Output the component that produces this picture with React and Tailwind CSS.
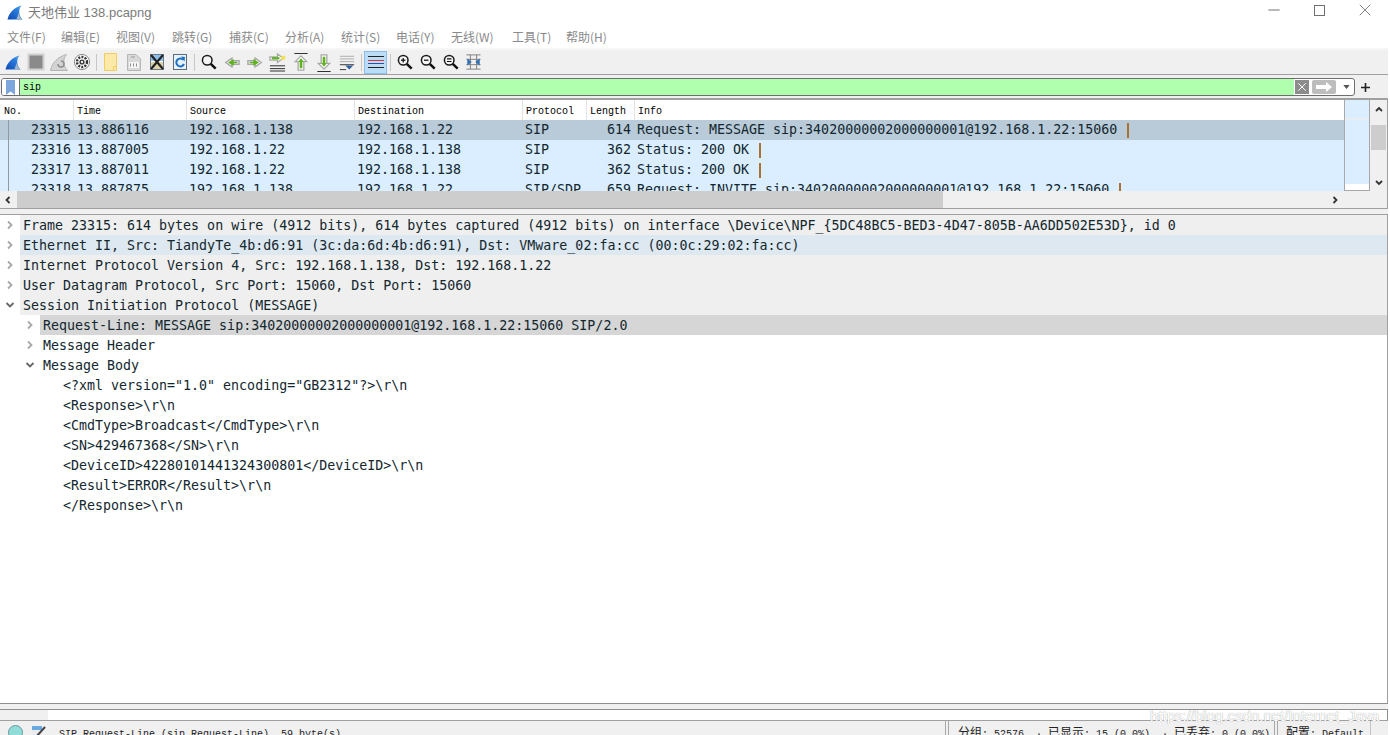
import { X, Minus } from 'lucide-react';

const cjk = 'font-["Liberation_Sans","Noto_Sans_CJK_SC",sans-serif]';
const menuFont = 'font-["Noto_Sans_CJK_SC","Noto_Sans",sans-serif]';
const mono = 'font-["DejaVu_Sans_Mono",monospace]';
const small = 'font-["Liberation_Mono","Noto_Sans_CJK_SC",monospace]';

const menus = [
  ['文件(F)', 'w-[54px]'],
  ['编辑(E)', 'w-[55px]'],
  ['视图(V)', 'w-[56px]'],
  ['跳转(G)', 'w-[57px]'],
  ['捕获(C)', 'w-[56px]'],
  ['分析(A)', 'w-[56px]'],
  ['统计(S)', 'w-[55px]'],
  ['电话(Y)', 'w-[55px]'],
  ['无线(W)', 'w-[61px]'],
  ['工具(T)', 'w-[54px]'],
  ['帮助(H)', 'w-[54px]'],
];

const Fin = ({ id, width, height }) => (
  <svg width={width} height={height} viewBox="0 0 18 17">
    <defs>
      <linearGradient id={id} x1="0" y1="1" x2="1" y2="0">
        <stop offset="0" stopColor="#0f49b4" />
        <stop offset="0.65" stopColor="#2a7ddc" />
        <stop offset="1" stopColor="#6fb2ee" />
      </linearGradient>
    </defs>
    <path d="M0.5 16.5 C2 9 8 2.5 16.5 0.5 C12.5 5 13 12 17.5 16.5 Z" fill={`url(#${id})`} />
    <path d="M13.2 9 C13.6 12 15 14.5 17.5 16.5 L10.5 16.5 Z" fill="#a3b8cc" />
  </svg>
);

const Stop = () => (
  <svg width="18" height="18" viewBox="0 0 18 18">
    <rect x="1.5" y="1.5" width="15" height="15" fill="#8a8a8a" stroke="#d0d0d0" strokeWidth="2" />
  </svg>
);

const Restart = () => (
  <svg width="18" height="17" viewBox="0 0 18 17">
    <path d="M0.5 16.5 C2 9 8 2.5 16.5 0.5 C12.5 5 13 12 17.5 16.5 Z" fill="#d4d4d4" stroke="#b4b4b4" />
    <path d="M8 10 a3 3 0 1 0 3 -3" fill="none" stroke="#8f8f8f" strokeWidth="1.5" />
  </svg>
);

const Gear = () => (
  <svg width="18" height="18" viewBox="0 0 18 18">
    <circle cx="9" cy="9" r="7.6" fill="#fff" stroke="#8a8a8a" />
    <circle cx="9" cy="9" r="5" fill="none" stroke="#333" strokeWidth="2.4" strokeDasharray="2 1.2" />
    <circle cx="9" cy="9" r="2.6" fill="#333" />
    <circle cx="9" cy="9" r="1.2" fill="#eee" />
  </svg>
);

const Folder = () => (
  <svg width="13" height="18" viewBox="0 0 13 18">
    <path d="M0.5 0.5 H12.5 V17.5 H0.5 Z" fill="#fde9a8" stroke="#f2cd62" />
    <path d="M9.5 17.5 V13.5 H12.5" fill="none" stroke="#f2cd62" />
  </svg>
);

const Doc = () => (
  <svg width="14" height="17" viewBox="0 0 14 17">
    <path d="M0.5 0.5 H9 L13.5 5 V16.5 H0.5 Z" fill="#d9d9d9" stroke="#b5b5b5" />
    <rect x="2" y="8" width="10" height="6" fill="#f5f5f5" />
    <path d="M3.5 9.5 V12.5 M6.5 9.5 V12.5 M9.5 9.5 V12.5" stroke="#8f8f8f" />
    <path d="M4 3 H8" stroke="#9a9a9a" />
  </svg>
);

const CloseFile = () => (
  <svg width="14" height="16" viewBox="0 0 14 16">
    <rect x="0.5" y="0.5" width="13" height="15" fill="#fff" stroke="#6b7a88" />
    <rect x="1" y="1" width="12" height="6" fill="#8fc0ec" />
    <rect x="1" y="8" width="12" height="7" fill="#dcd3a8" />
    <path d="M1 1 L13 15 M13 1 L1 15" stroke="#222" strokeWidth="2.2" />
  </svg>
);

const Reload = () => (
  <svg width="14" height="16" viewBox="0 0 14 16">
    <rect x="0.5" y="0.5" width="13" height="15" fill="#e8f2fb" stroke="#5d6c7b" />
    <path d="M10.5 6 A4 4 0 1 0 11 10" fill="none" stroke="#1f6fc4" strokeWidth="2" />
    <path d="M8 2.5 L12 3 L11.5 7.5 Z" fill="#1f6fc4" />
  </svg>
);

const Lens = ({ sign }) => (
  <svg width="16" height="16" viewBox="0 0 18 18">
    <circle cx="7" cy="7" r="5.4" fill="#f4f4f4" stroke="#1c1c1c" strokeWidth="1.7" />
    <path d="M11 11 L16.5 16.5" stroke="#111" strokeWidth="2.8" />
    {sign !== 'find' && sign !== 'reset' && <path d="M4.5 7 H9.5" stroke="#111" strokeWidth="1.4" />}
    {sign === 'plus' && <path d="M7 4.5 V9.5" stroke="#111" strokeWidth="1.4" />}
    {sign === 'reset' && <path d="M4.5 8.5 H9.5 M4.5 5.5 H9.5" stroke="#111" strokeWidth="1.2" />}
  </svg>
);

const Arrow = ({ flip }) => (
  <svg width="16" height="11" viewBox="0 0 18 12" className={flip ? '-scale-x-100' : ''}>
    <path d="M1 4 H9 V1 L16 6 L9 11 V8 H1 Z" fill="#fff" stroke="#a9a9a9" strokeWidth="1.6" />
    <path d="M3 6 H10 M8 3.6 L12 6 L8 8.4 Z" fill="#5fb31c" stroke="#5fb31c" strokeWidth="1.6" />
  </svg>
);

const GoTo = () => (
  <svg width="17" height="19" viewBox="0 0 18 20">
    <path d="M1 13.5 H17 M1 16.5 H17 M1 19 H17" stroke="#222" />
    <path d="M1 4 H9 V1 L15 5.5 L9 10 V7.5 H1 Z" fill="#fff" stroke="#a9a9a9" strokeWidth="1.4" />
    <path d="M3 5.5 H11" stroke="#5fb31c" strokeWidth="2.4" />
    <rect x="13" y="3" width="4" height="4" fill="#f3e24a" />
  </svg>
);

const UpDown = ({ down }) => (
  <svg width="14" height="19" viewBox="0 0 14 20" className={down ? '-scale-y-100' : ''}>
    <path d="M0 0.5 H14" stroke="#222" />
    <path d="M7 3 L13 9 H10 V18 H4 V9 H1 Z" fill="#fff" stroke="#a9a9a9" strokeWidth="1.4" />
    <path d="M7 5.5 L10 9.5 H8.4 V16 H5.6 V9.5 H4 Z" fill="#5fb31c" />
  </svg>
);

const Last = () => (
  <svg width="16" height="17" viewBox="0 0 18 18">
    <path d="M1 2 H17 M1 5 H17 M1 8 H17" stroke="#a6a6a6" />
    <path d="M1 11.5 H17 M1 17 H8" stroke="#222" />
    <path d="M7 12.5 H16 L11.5 17 Z" fill="#2f5f9e" />
  </svg>
);

const Colorize = () => (
  <svg width="16" height="14" viewBox="0 0 16 14">
    <path d="M0 1.5 H16" stroke="#222" />
    <path d="M0 5.5 H16" stroke="#d9383a" />
    <path d="M0 8.5 H16" stroke="#2b4fae" />
    <path d="M0 12.5 H16" stroke="#222" />
  </svg>
);

const Resize = () => (
  <svg width="15" height="16" viewBox="0 0 16 18">
    <path d="M0 1 H16 M0 17 H16 M0 6 H16 M0 12 H16" stroke="#777" />
    <path d="M4.5 1 V17 M11.5 1 V17" stroke="#777" />
    <path d="M1 5 L6 9 L1 13 Z M15 5 L10 9 L15 13 Z" fill="#2e6fb5" />
  </svg>
);

const Tool = ({ children, active }) => (
  <div className={`w-[23px] h-[23px] flex items-center justify-center shrink-0 ${active ? 'bg-[#bcdcf5] border border-[#8cbde6]' : ''}`}>
    {children}
  </div>
);

const Sep = () => (
  <div className="w-[6px] flex justify-center shrink-0">
    <div className="w-px h-[17px] bg-[#c8c8c8]" />
  </div>
);

const Toolbar = () => (
  <div className="h-[24px] shrink-0 flex items-center pl-px bg-[#f0f0f0]">
    <Tool><Fin id="fin-tool" width={16} height={15} /></Tool>
    <Tool><Stop /></Tool>
    <Tool><Restart /></Tool>
    <Tool><Gear /></Tool>
    <Sep />
    <Tool><Folder /></Tool>
    <Tool><Doc /></Tool>
    <Tool><CloseFile /></Tool>
    <Tool><Reload /></Tool>
    <Sep />
    <Tool><Lens sign="find" /></Tool>
    <Tool><Arrow flip /></Tool>
    <Tool><Arrow /></Tool>
    <Tool><GoTo /></Tool>
    <Tool><UpDown /></Tool>
    <Tool><UpDown down /></Tool>
    <Tool><Last /></Tool>
    <Sep />
    <Tool active><Colorize /></Tool>
    <Sep />
    <Tool><Lens sign="plus" /></Tool>
    <Tool><Lens sign="minus" /></Tool>
    <Tool><Lens sign="reset" /></Tool>
    <Tool><Resize /></Tool>
  </div>
);

const FilterBar = () => (
  <div className="h-[24px] shrink-0 flex items-center bg-[#f0f0f0] border-t border-[#a0a0a0] pl-px pr-[18px] pt-px">
    <div className="flex-1 h-[18px] flex items-stretch border border-[#6e6e6e] rounded-[3px] overflow-hidden bg-white">
      <div className="w-[18px] flex items-center justify-center border-r border-[#6e6e6e] bg-white">
        <svg width="9" height="15" viewBox="0 0 9 15"><path d="M0 0 H9 V15 L4.5 11.5 L0 15 Z" fill="#7da7dc" /></svg>
      </div>
      <div className={`flex-1 bg-[#afffaf] pl-[3px] text-[10px] leading-[17px] text-black ${small}`}>sip</div>
      <div className="flex items-center gap-[2px] pl-[1px] pr-[4px]">
        <div className="w-[14px] h-[14px] mr-px bg-[#8c8c8c] flex items-center justify-center">
          <X size={14} strokeWidth={1.6} className="text-white" />
        </div>
        <div className="w-[24px] h-[14px] bg-[#bdbdbd] rounded-[2px] flex items-center justify-center">
          <svg width="16" height="10" viewBox="0 0 16 10"><path d="M0 3 H10 V0 L16 5 L10 10 V7 H0 Z" fill="#fff" /></svg>
        </div>
        <svg width="7" height="4" viewBox="0 0 8 5" className="ml-[5px]"><path d="M0 0 H8 L4 5 Z" fill="#555" /></svg>
      </div>
    </div>
    <svg width="9" height="9" viewBox="0 0 9 9" className="ml-[6px]"><path d="M4.5 0 V9 M0 4.5 H9" stroke="#222" strokeWidth="1.6" /></svg>
  </div>
);

const columns = [
  ['No.', 'w-[74px]'],
  ['Time', 'w-[113px]'],
  ['Source', 'w-[168px]'],
  ['Destination', 'w-[168px]'],
  ['Protocol', 'w-[64px]'],
  ['Length', 'w-[48px]'],
  ['Info', 'flex-1'],
];

const packets = [
  { no: '23315', time: '13.886116', src: '192.168.1.138', dst: '192.168.1.22', proto: 'SIP', len: '614', info: 'Request: MESSAGE sip:34020000002000000001@192.168.1.22:15060', sel: true },
  { no: '23316', time: '13.887005', src: '192.168.1.22', dst: '192.168.1.138', proto: 'SIP', len: '362', info: 'Status: 200 OK' },
  { no: '23317', time: '13.887011', src: '192.168.1.22', dst: '192.168.1.138', proto: 'SIP', len: '362', info: 'Status: 200 OK' },
  { no: '23318', time: '13.887875', src: '192.168.1.138', dst: '192.168.1.22', proto: 'SIP/SDP', len: '659', info: 'Request: INVITE sip:34020000002000000001@192.168.1.22:15060' },
];

const PacketRow = ({ p }) => (
  <div className={`h-[20px] shrink-0 flex items-center whitespace-pre text-[13.3px] leading-[20px] text-[#12272e] ${mono} ${p.sel ? 'bg-[#b9cad8]' : 'bg-[#daeeff]'}`}>
    <div className="w-[9px] h-full border-r border-[#8f9aa3] shrink-0" />
    <div className="w-[62px] text-right shrink-0">{p.no}</div>
    <div className="w-[116px] pl-[6px] shrink-0">{p.time}</div>
    <div className="w-[168px] pl-[2px] shrink-0">{p.src}</div>
    <div className="w-[168px] pl-[2px] shrink-0">{p.dst}</div>
    <div className="w-[64px] pl-[2px] shrink-0">{p.proto}</div>
    <div className="w-[48px] text-right pr-[4px] shrink-0">{p.len}</div>
    <div className="pl-[2px] flex items-center">
      {p.info}
      <span className="ml-[10px] w-[2px] h-[15px] bg-[#a9712f]" />
    </div>
  </div>
);

const PacketList = () => (
  <div className="h-[111px] shrink-0 flex border-b border-t-2 border-r border-[#a0a0a0] bg-white">
    <div className="flex-1 min-w-0 flex flex-col">
      <div className="flex-1 min-h-0 flex">
        <div className="flex-1 min-w-0 flex flex-col overflow-hidden">
          <div className={`h-[20px] shrink-0 flex bg-white text-[10px] leading-[23px] text-black ${small}`}>
            {columns.map(([name, w]) => (
              <div key={name} className={`${w} pl-[3px] first:pl-[4px] border-r border-[#e4e4e4] last:border-r-0 shrink-0`}>{name}</div>
            ))}
          </div>
          {packets.map(p => <PacketRow key={p.no} p={p} />)}
        </div>
        <div className="w-[26px] shrink-0 flex flex-col border-l border-[#a8a8a8] border-r border-b">
          <div className="h-[20px] bg-[#daeeff] border-b-2 border-[#e9edf0]" />
          <div className="flex-1 bg-[#daeeff]" />
          <div className="h-[6px] bg-white" />
        </div>
      </div>
      <div className="h-[17px] shrink-0 flex items-center bg-[#f0f0f0]">
        <svg width="8" height="8" viewBox="0 0 8 8" className="ml-[4px] mr-[5px]"><path d="M5.5 1 L2.5 4 L5.5 7" fill="none" stroke="#333" strokeWidth="1.8" /></svg>
        <div className="w-[926px] h-full bg-[#cdcdcd]" />
        <div className="flex-1 flex justify-end pr-[31px]">
          <svg width="8" height="8" viewBox="0 0 8 8"><path d="M2.5 1 L5.5 4 L2.5 7" fill="none" stroke="#333" strokeWidth="1.8" /></svg>
        </div>
      </div>
    </div>
    <div className="w-[17px] shrink-0 flex flex-col items-center bg-[#f0f0f0]">
      <svg width="8" height="6" viewBox="0 0 8 6" className="mt-[6px]"><path d="M1 5 L4 2 L7 5" fill="none" stroke="#333" strokeWidth="1.8" /></svg>
      <div className="w-[15px] h-[25px] bg-[#cdcdcd] mt-[13px]" />
      <svg width="8" height="6" viewBox="0 0 8 6" className="mt-[30px]"><path d="M1 1 L4 4 L7 1" fill="none" stroke="#333" strokeWidth="1.8" /></svg>
    </div>
  </div>
);

const Chevron = ({ open }) => (
  <svg width="10" height="10" viewBox="0 0 10 10" className="shrink-0">
    {open
      ? <path d="M1.5 3 L5 6.5 L8.5 3" fill="none" stroke="#666" strokeWidth="1.8" />
      : <path d="M3 1.5 L6.5 5 L3 8.5" fill="none" stroke="#a8a8a8" strokeWidth="1.8" />}
  </svg>
);

const details = [
  { text: 'Frame 23315: 614 bytes on wire (4912 bits), 614 bytes captured (4912 bits) on interface \\Device\\NPF_{5DC48BC5-BED3-4D47-805B-AA6DD502E53D}, id 0', level: 0, bg: 'bg-[#efefef]' },
  { text: 'Ethernet II, Src: TiandyTe_4b:d6:91 (3c:da:6d:4b:d6:91), Dst: VMware_02:fa:cc (00:0c:29:02:fa:cc)', level: 0, bg: 'bg-[#dee8f0]' },
  { text: 'Internet Protocol Version 4, Src: 192.168.1.138, Dst: 192.168.1.22', level: 0, bg: 'bg-[#efefef]' },
  { text: 'User Datagram Protocol, Src Port: 15060, Dst Port: 15060', level: 0, bg: 'bg-[#efefef]' },
  { text: 'Session Initiation Protocol (MESSAGE)', level: 0, bg: 'bg-[#efefef]', open: true },
  { text: 'Request-Line: MESSAGE sip:34020000002000000001@192.168.1.22:15060 SIP/2.0', level: 1, bg: 'bg-[#d6d6d6]' },
  { text: 'Message Header', level: 1 },
  { text: 'Message Body', level: 1, open: true },
];

const xmlLines = [
  '<?xml version="1.0" encoding="GB2312"?>\\r\\n',
  '<Response>\\r\\n',
  '<CmdType>Broadcast</CmdType>\\r\\n',
  '<SN>429467368</SN>\\r\\n',
  '<DeviceID>42280101441324300801</DeviceID>\\r\\n',
  '<Result>ERROR</Result>\\r\\n',
  '</Response>\\r\\n',
];

const DetailRow = ({ d }) => (
  <div className={`h-[20px] flex items-center ${d.level ? 'pl-[25px]' : 'pl-[5px]'}`}>
    <Chevron open={d.open} />
    <div className={`flex-1 h-full pl-[3px] ml-[5px] ${d.bg || ''}`}>{d.text}</div>
  </div>
);

const DetailPane = () => (
  <div className={`flex-1 min-h-0 overflow-hidden bg-white border-t border-r border-[#a0a0a0] whitespace-pre text-[13.3px] leading-[22px] text-[#12272e] ${mono}`}>
    {details.map(d => <DetailRow key={d.text} d={d} />)}
    {xmlLines.map(line => (
      <div key={line} className="h-[20px] pl-[63px]">{line}</div>
    ))}
  </div>
);

const Zh = ({ children }) => <span className="text-[12px]">{children}</span>;

const StatusBar = () => (
  <div className={`h-[15px] shrink-0 flex items-start overflow-hidden bg-[#f0f0f0] border-t border-[#a0a0a0] text-[10px] leading-[14px] text-[#222] whitespace-pre ${small}`}>
    <div className="w-[8px] shrink-0" />
    <div className="w-[15px] h-[15px] mt-[4px] rounded-full bg-[#8fdcd8] border border-[#6a9aa0] shrink-0" />
    <svg width="16" height="14" viewBox="0 0 16 14" className="ml-[8px] mt-[4px] shrink-0">
      <rect x="1" y="1" width="10" height="13" fill="#ececec" />
      <rect x="1" y="1" width="10" height="4" fill="#6aa8e0" />
      <path d="M5 12 L14 2" stroke="#444" strokeWidth="2" />
    </svg>
    <div className="ml-[12px] flex-1 mt-[7px]">SIP Request-Line (sip.Request-Line), 59 byte(s)</div>
    <div className="w-[4px] h-full border-x border-[#a8a8a8] shrink-0" />
    <div className="w-[325px] pl-[9px] mt-[6px] shrink-0"><Zh>分组</Zh>: 52576  · <Zh>已显示</Zh>: 15 (0.0%)  · <Zh>已丢弃</Zh>: 0 (0.0%)</div>
    <div className="w-[4px] h-full border-x border-[#a8a8a8] shrink-0" />
    <div className="w-[92px] pl-[8px] mt-[6px] shrink-0"><Zh>配置</Zh>: Default</div>
    <div className="w-px h-full bg-[#c4c4c4] shrink-0" />
    <div className="w-[17px] shrink-0" />
  </div>
);

export default function App() {
  return (
    <div className="relative h-[735px] w-[1390px] flex flex-col overflow-hidden bg-white pr-[2px]">
      <div className="h-[25px] shrink-0 flex items-center pl-[7px]">
        <Fin id="fin-title" width={16} height={15} />
        <span className={`ml-[5px] text-[13px] text-[#7b7b7b] ${cjk}`}>天地伟业 138.pcapng</span>
        <div className="ml-auto flex items-center pb-[5px] text-[#707070]">
          <Minus size={18} strokeWidth={1.3} className="mr-[31px]" />
          <div className="w-[11px] h-[11px] border border-[#707070] mr-[30px]" />
          <X size={20} strokeWidth={1} className="mr-[13px]" />
        </div>
      </div>
      <div className={`h-[23px] shrink-0 flex items-center pl-[7px] text-[12px] text-[#8a8a8a] ${menuFont}`}>
        {menus.map(([label, w]) => <div key={label} className={w}>{label}</div>)}
      </div>
      <div className="h-[2px] shrink-0 bg-[#f6f6f6]" />
      <Toolbar />
      <FilterBar />
      <PacketList />
      <div className="h-[5px] shrink-0 bg-[#f0f0f0]" />
      <DetailPane />
      <div className="h-[6px] shrink-0 bg-[#f0f0f0] border-t border-[#8f8f8f]" />
      <div className="h-[11px] shrink-0 flex border-t border-r border-[#8f8f8f]">
        <div className="w-[48px] bg-[#f0f0f0]" />
      </div>
      <StatusBar />
      <div className="absolute left-[1150px] top-[706px] text-[15px] leading-[20px] text-white [text-shadow:0_0_1px_#888] font-['Liberation_Sans',sans-serif] whitespace-nowrap">
        https://blog.csdn.net/Internet_Java
      </div>
    </div>
  );
}
